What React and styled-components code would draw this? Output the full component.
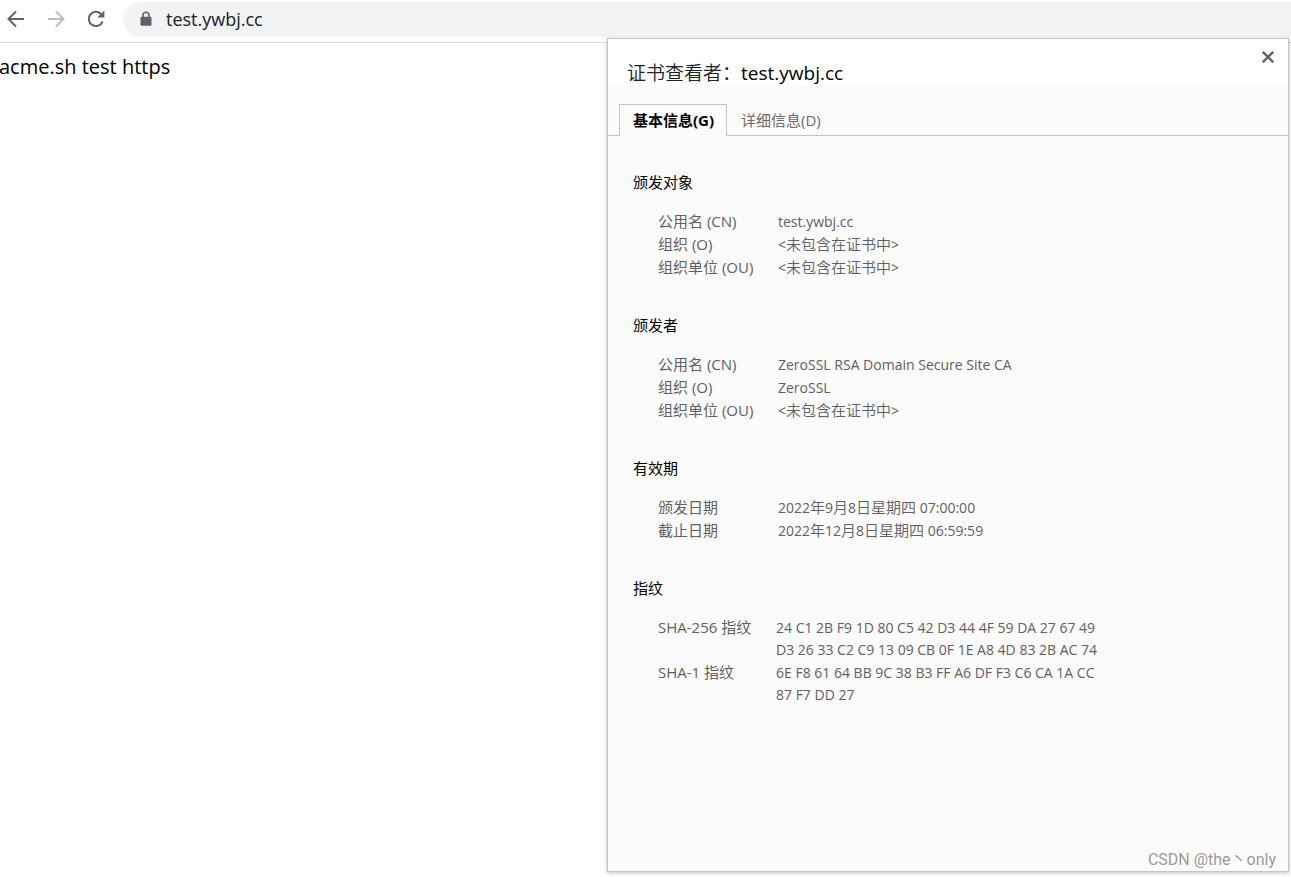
import { useState } from 'react';
import styled, { createGlobalStyle } from 'styled-components';

const sections = [
  {
    title: '颁发对象',
    rows: [
      ['公用名 (CN)', 'test.ywbj.cc'],
      ['组织 (O)', '<未包含在证书中>'],
      ['组织单位 (OU)', '<未包含在证书中>'],
    ],
  },
  {
    title: '颁发者',
    rows: [
      ['公用名 (CN)', 'ZeroSSL RSA Domain Secure Site CA'],
      ['组织 (O)', 'ZeroSSL'],
      ['组织单位 (OU)', '<未包含在证书中>'],
    ],
  },
  {
    title: '有效期',
    rows: [
      ['颁发日期', '2022年9月8日星期四 07:00:00'],
      ['截止日期', '2022年12月8日星期四 06:59:59'],
    ],
  },
  {
    title: '指纹',
    fingerprint: true,
    rows: [
      ['SHA-256 指纹', '24 C1 2B F9 1D 80 C5 42 D3 44 4F 59 DA 27 67 49\nD3 26 33 C2 C9 13 09 CB 0F 1E A8 4D 83 2B AC 74'],
      ['SHA-1 指纹', '6E F8 61 64 BB 9C 38 B3 FF A6 DF F3 C6 CA 1A CC\n87 F7 DD 27'],
    ],
  },
];

// Chinese runs inside a value are set one pixel larger than the latin text
const Mixed = ({ children }) =>
  children
    .split(/([\u4e00-\u9fff]+)/)
    .filter(Boolean)
    .map((part, i) => (/[\u4e00-\u9fff]/.test(part) ? <Han key={i}>{part}</Han> : part));

const BackIcon = () => (
  <svg width="20" height="20" viewBox="0 0 20 20" fill="none" stroke="currentColor" strokeWidth="2">
    <path d="M18 10H3M10 2.5L2.5 10l7.5 7.5" />
  </svg>
);

const ForwardIcon = () => (
  <svg width="20" height="20" viewBox="0 0 20 20" fill="none" stroke="currentColor" strokeWidth="2">
    <path d="M2 10h15M10 2.5l7.5 7.5-7.5 7.5" />
  </svg>
);

const ReloadIcon = () => (
  <svg width="20" height="20" viewBox="0 0 20 20" fill="none">
    <path d="M16.6 12.3A7.1 7.1 0 1 1 15 5" stroke="currentColor" strokeWidth="2" />
    <path d="M18.4 1.5V8.6H11.2Z" fill="currentColor" />
  </svg>
);

const LockIcon = () => (
  <svg width="12" height="16" viewBox="0 0 12 16">
    <path d="M3 6.5V4.2a3 3 0 0 1 6 0v2.3" fill="none" stroke="currentColor" strokeWidth="1.6" />
    <rect x="0.5" y="5.8" width="11" height="9" rx="1.2" fill="currentColor" />
  </svg>
);

const CloseIcon = () => (
  <svg width="12" height="12" viewBox="0 0 12 12" stroke="currentColor" strokeWidth="2.4">
    <path d="M0.8 0.8l10.4 10.4M11.2 0.8L0.8 11.2" />
  </svg>
);

const App = () => {
  const [tab, setTab] = useState('general');

  return (
    <>
      <GlobalStyle />
      <Browser>
        <Toolbar>
          <NavButton aria-label="后退"><BackIcon /></NavButton>
          <NavButton aria-label="前进" disabled><ForwardIcon /></NavButton>
          <NavButton aria-label="重新加载"><ReloadIcon /></NavButton>
          <AddressBar>
            <LockIcon />
            <AddressInput aria-label="地址" defaultValue="test.ywbj.cc" />
          </AddressBar>
        </Toolbar>
        <Page>acme.sh test https</Page>

        <Dialog role="dialog" aria-labelledby="dialog-title">
          <DialogHeader>
            <DialogTitle id="dialog-title">证书查看者：<TitleHost>test.ywbj.cc</TitleHost></DialogTitle>
            <CloseButton aria-label="关闭"><CloseIcon /></CloseButton>
          </DialogHeader>
          <TabList role="tablist">
            <Tab role="tab" aria-selected={tab === 'general'} $active={tab === 'general'} onClick={() => setTab('general')}>
              基本信息(G)
            </Tab>
            <Tab role="tab" aria-selected={tab === 'details'} $active={tab === 'details'} onClick={() => setTab('details')}>
              详细信息(D)
            </Tab>
          </TabList>
          {tab === 'general' && (
            <Panel role="tabpanel">
              {sections.map((section) => (
                <section key={section.title}>
                  <SectionTitle>{section.title}</SectionTitle>
                  <Fields $labelWidth={section.fingerprint ? 118 : 120}>
                    {section.rows.map(([label, value]) => (
                      <Field key={label}>
                        <dt>{label}</dt>
                        <dd><Mixed>{value}</Mixed></dd>
                      </Field>
                    ))}
                  </Fields>
                </section>
              ))}
            </Panel>
          )}
        </Dialog>
        <Watermark>CSDN @the丶only</Watermark>
      </Browser>
    </>
  );
};

const GlobalStyle = createGlobalStyle`
  * {
    box-sizing: border-box;
  }

  body {
    margin: 0;
    background: #fff;
    color: #000;
    font-family: 'Open Sans', 'Noto Sans CJK SC', sans-serif;
  }

  button,
  input {
    font: inherit;
    border: 0;
    padding: 0;
    background: none;
  }
`;

const Browser = styled.div`
  position: relative;
  min-height: 100vh;
  overflow: hidden;
`;

const Toolbar = styled.header`
  display: flex;
  align-items: center;
  gap: 20px;
  height: 43px;
  padding: 0 0 4px 6px;
  border-bottom: 1px solid #d9dadc;
`;

const NavButton = styled.button`
  display: flex;
  flex: none;
  color: #5f6368;

  &:disabled {
    color: #babcbe;
  }
`;

const AddressBar = styled.div`
  display: flex;
  flex: 1;
  align-items: center;
  gap: 14px;
  height: 35px;
  margin-left: -3px;
  padding-left: 17px;
  border-radius: 18px 0 0 18px;
  background: #f1f3f4;
  color: #5f6368;
`;

const AddressInput = styled.input`
  flex: 1;
  min-width: 0;
  outline: none;
  color: #202124;
  font-size: 18px;
  line-height: 24px;
`;

const Page = styled.main`
  margin-left: -1px;
  padding-top: 10px;
  font-size: 20px;
  line-height: 28px;
`;

const Dialog = styled.div`
  position: absolute;
  top: 38px;
  right: 2px;
  bottom: 5px;
  width: 682px;
  max-width: 100%;
  overflow: auto;
  border: 1px solid #c4c4c4;
  background: #fbfbfb;
  box-shadow: 0 1px 4px rgba(0, 0, 0, 0.25);
`;

const DialogHeader = styled.div`
  display: flex;
  justify-content: space-between;
  align-items: flex-start;
  height: 47px;
  padding: 12px 14px 0 19px;
  background: #fff;
`;

const DialogTitle = styled.h1`
  margin: 8px 0 0;
  color: #202124;
  font-size: 19px;
  font-weight: 350;
  line-height: 28px;
`;

const TitleHost = styled.span`
  color: #000;
  font-weight: 400;
`;

const CloseButton = styled.button`
  display: flex;
  color: #5f6368;
`;

const TabList = styled.div`
  display: flex;
  height: 50px;
  padding: 18px 0 0 11px;
  border-bottom: 1px solid #c4c4c4;
`;

const Tab = styled.button`
  height: 32px;
  padding: 0 12px 2px 13px;
  border: 1px solid ${({ $active }) => ($active ? '#c4c4c4' : 'transparent')};
  border-bottom: 0;
  background: ${({ $active }) => ($active ? '#fbfbfb' : 'transparent')};
  color: ${({ $active }) => ($active ? '#000' : '#6b6b6b')};
  font-size: 15px;
  font-weight: ${({ $active }) => ($active ? 700 : 400)};
  line-height: 28px;
`;

const Panel = styled.div`
  display: flex;
  flex-direction: column;
  gap: 35px;
  padding: 35px 25px 0;
  color: #5f6062;
`;

const SectionTitle = styled.h2`
  margin: 0 0 17px;
  color: #000;
  font-size: 15px;
  font-weight: 400;
  line-height: 22px;
`;

const Fields = styled.dl`
  display: grid;
  grid-template-columns: ${({ $labelWidth }) => $labelWidth}px 1fr;
  align-items: baseline;
  margin: 0;
  padding-left: 25px;
  font-size: 15px;
  line-height: 22px;
`;

const Field = styled.div`
  display: contents;

  dd {
    margin: 0;
    font-size: 14px;
    white-space: pre-line;
  }
`;

const Han = styled.span`
  font-family: 'Noto Sans CJK SC', sans-serif;
  font-size: 15px;
  font-weight: 350;
  line-height: 1;
`;

const Watermark = styled.div`
  position: absolute;
  right: 15px;
  bottom: 7px;
  color: #999;
  font-family: Roboto, 'Noto Sans CJK SC', sans-serif;
  font-size: 16px;
  line-height: 20px;
  text-shadow: 0 1px 1px #fff;
`;

export default App;
